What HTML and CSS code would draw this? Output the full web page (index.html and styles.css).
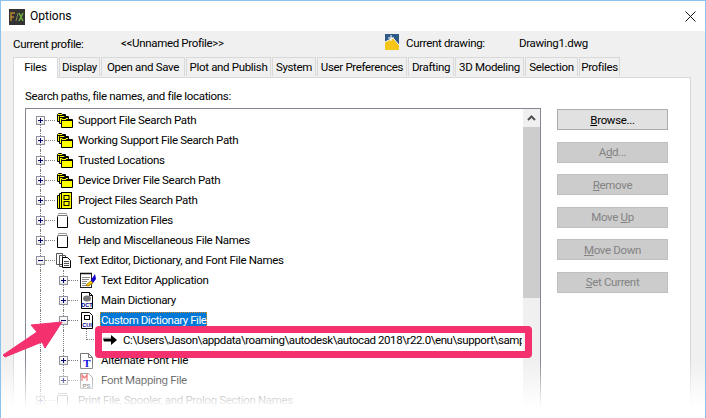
FILE: index.html
```html
<!DOCTYPE html>
<html lang="en">
<head>
<meta charset="utf-8">
<title>Options</title>
<link rel="stylesheet" href="styles.css">
</head>
<body>
<svg class="defs" width="0" height="0" aria-hidden="true">
  <symbol id="i-folders" viewBox="0 0 17 17">
    <path d="M1.500 9.500v-7l1-1h3l1 1h3v7z" fill="#ff0" stroke="#000"/>
    <path d="M3.500 11.500v-7l1-1h3l1 1h4v7z" fill="#ff0" stroke="#000"/>
    <path d="M5.500 15.500v-8l1-1h3l1 1h6v8z" fill="#ff0" stroke="#000"/>
    <path d="M1.500 3.500h8M3.500 5.500h9M5.500 8.500h11" stroke="#000"/>
  </symbol>
  <symbol id="i-project" viewBox="0 0 17 17">
    <path d="M1.500 3.500h2v13h-2zM3.500 1.500h2v15h-2z" fill="#ff0" stroke="#000"/>
    <rect x="5.500" y=".5" width="10" height="16" fill="#ff0" stroke="#000"/>
    <rect x="8" y="3.500" width="5" height="4" fill="#ff0" stroke="#000"/>
    <rect x="8" y="9.500" width="5" height="4" fill="#ff0" stroke="#000"/>
  </symbol>
  <symbol id="i-docs" viewBox="0 0 17 17">
    <path d="M2.500 2.500v-1h8v1" fill="#fff" stroke="#999"/>
    <path d="M1.500 3.500h10" stroke="#777"/>
    <path d="M1.500 4.500v11h10v-11" fill="#fff" stroke="#000"/>
  </symbol>
  <symbol id="i-pages" viewBox="0 0 17 17">
    <path d="M.5 1.500h6v11h-6zM3.500 3.500h6v11h-6z" fill="#fff" stroke="#555"/>
    <path d="M6.500 5.500h5l3 3v7h-8z" fill="#fff" stroke="#000"/>
    <path d="M8 9.500h5M8 11.500h5M8 13.500h5" stroke="#555"/>
  </symbol>
  <symbol id="i-editor" viewBox="0 0 17 17">
    <rect x="1.500" y="1.500" width="11" height="14" fill="#fff" stroke="#222"/>
    <path d="M2 .5v2M4 .5v2M6 .5v2M8 .5v2M10 .5v2M12 .5v2" stroke="#000"/>
    <path d="M3 5.500h8M3 7.500h7M3 9.500h5M3 11.500h4M3 13.500h8" stroke="#888"/>
    <path d="M7 13l5-4 2 2-5 3z" fill="#fc0" stroke="#a80"/>
    <path d="M12 8l4-6 1 5-3 4z" fill="#10c"/>
  </symbol>
  <symbol id="i-arrow" viewBox="0 0 14 12">
    <path d="M0 4.500h8V1l6 5-6 5V7.500H1z" fill="#000"/>
    <path d="M0 4h8" stroke="#aaa"/>
  </symbol>
</svg>

<div class="window">
  <header class="titlebar">
    <svg class="app-icon" viewBox="0 0 16 16" width="16" height="16" aria-hidden="true">
      <rect width="16" height="16" fill="#333"/>
      <path d="M2 12V4h4M2 8h3" fill="none" stroke="#b8862e" stroke-width="1.500"/>
      <path d="M7 12l2-8" fill="none" stroke="#8a8a5a"/>
      <path d="M10 4l4 8M14 4l-4 8" fill="none" stroke="#6fae3c" stroke-width="1.500"/>
    </svg>
    <span class="title">Options</span>
    <svg class="close" viewBox="0 0 11 11" width="11" height="11" aria-hidden="true">
      <path d="M.5.500l10 10M10.500.500l-10 10" stroke="#111" fill="none"/>
    </svg>
  </header>

  <div class="profile">
    <span class="profile-label">Current profile:</span>
    <span class="profile-name">&lt;&lt;Unnamed Profile&gt;&gt;</span>
    <svg class="dwg-icon" viewBox="0 0 15 16" width="15" height="16" aria-hidden="true">
      <rect x="0" y="0" width="14" height="10" fill="#2d5a86"/>
      <path d="M0 16V8l8-4 6 7v5z" fill="#f5c518"/>
      <path d="M0 8l8-4 6 7" fill="none" stroke="#fff"/>
      <path d="M6 1v6M3 4h6" stroke="#fff"/>
    </svg>
    <span class="drawing-label">Current drawing:</span>
    <span class="drawing-name">Drawing1.dwg</span>
  </div>

  <nav class="tabs">
    <span class="tab active w45">Files</span>
    <span class="tab w42">Display</span>
    <span class="tab w85">Open and Save</span>
    <span class="tab w86">Plot and Publish</span>
    <span class="tab w45">System</span>
    <span class="tab w91">User Preferences</span>
    <span class="tab w47">Drafting</span>
    <span class="tab w70">3D Modeling</span>
    <span class="tab w54">Selection</span>
    <span class="tab w42">Profiles</span>
  </nav>

  <main class="panel">
    <section class="paths">
      <div class="paths-label">Search paths, file names, and file locations:</div>
      <div class="treebox">
        <div class="tree">
          <div class="row l0"><span class="exp plus"></span><span class="dash"></span><svg class="ico"><use href="#i-folders"/></svg><span class="label">Support File Search Path</span></div>
          <div class="row l0"><span class="exp plus"></span><span class="dash"></span><svg class="ico"><use href="#i-folders"/></svg><span class="label">Working Support File Search Path</span></div>
          <div class="row l0"><span class="exp plus"></span><span class="dash"></span><svg class="ico"><use href="#i-folders"/></svg><span class="label">Trusted Locations</span></div>
          <div class="row l0"><span class="exp plus"></span><span class="dash"></span><svg class="ico"><use href="#i-folders"/></svg><span class="label">Device Driver File Search Path</span></div>
          <div class="row l0"><span class="exp plus"></span><span class="dash"></span><svg class="ico"><use href="#i-project"/></svg><span class="label">Project Files Search Path</span></div>
          <div class="row l0"><span class="exp plus"></span><span class="dash"></span><svg class="ico"><use href="#i-docs"/></svg><span class="label">Customization Files</span></div>
          <div class="row l0"><span class="exp plus"></span><span class="dash"></span><svg class="ico"><use href="#i-docs"/></svg><span class="label">Help and Miscellaneous File Names</span></div>
          <div class="row l0"><span class="exp minus"></span><span class="dash"></span><svg class="ico"><use href="#i-pages"/></svg><span class="label">Text Editor, Dictionary, and Font File Names</span></div>
          <div class="row l1"><span class="exp plus"></span><span class="dash"></span><svg class="ico"><use href="#i-editor"/></svg><span class="label">Text Editor Application</span></div>
          <div class="row l1"><span class="exp plus"></span><span class="dash"></span>
            <svg class="ico" viewBox="0 0 17 17" aria-hidden="true">
              <path d="M2.500.5h8l3 3v13h-11z" fill="#fff" stroke="#000"/>
              <path d="M10.500.5v3h3" fill="none" stroke="#000"/>
              <ellipse cx="8" cy="6.500" rx="4" ry="3" fill="#777"/>
              <text x="8" y="15" class="icon-text">DCT</text>
            </svg><span class="label">Main Dictionary</span></div>
          <div class="row l1 open"><span class="exp minus"></span><span class="dash"></span>
            <svg class="ico" viewBox="0 0 17 17" aria-hidden="true">
              <path d="M2.500.5h8l3 3v13h-11z" fill="#fff" stroke="#000"/>
              <rect x="5.500" y="3.500" width="5" height="4" fill="#fff" stroke="#000"/>
              <text x="8" y="15" class="icon-text">CUI</text>
            </svg><span class="label selected">Custom Dictionary File</span></div>
          <div class="row l2"><span class="elbow"></span><svg class="arrow"><use href="#i-arrow"/></svg><span class="path">C:\Users\Jason\appdata\roaming\autodesk\autocad 2018\r22.0\enu\support\samp</span></div>
          <div class="row l1"><span class="exp plus"></span><span class="dash"></span>
            <svg class="ico" viewBox="0 0 17 17" aria-hidden="true">
              <path d="M1.500 1.500h8l4 4v11h-12z" fill="#fff" stroke="#777"/>
              <path d="M9.500 1.500v4h4" fill="none" stroke="#777"/>
              <text x="8" y="15" class="icon-text big">T</text>
            </svg><span class="label">Alternate Font File</span></div>
          <div class="row l1 last"><span class="exp plus"></span><span class="dash"></span>
            <svg class="ico" viewBox="0 0 17 17" aria-hidden="true">
              <path d="M1.500 1.500h8l4 4v11h-12z" fill="#fff" stroke="#888"/>
              <path d="M3 9V3l2.500 3L8 3v6" fill="none" stroke="#e33" stroke-width="1.300"/>
              <text x="7.500" y="15.500" class="icon-text ps">PS</text>
            </svg><span class="label">Font Mapping File</span></div>
          <div class="row l0"><span class="exp plus"></span><span class="dash"></span><svg class="ico"><use href="#i-docs"/></svg><span class="label">Print File, Spooler, and Prolog Section Names</span></div>
        </div>
        <div class="scrollbar">
          <div class="sb-btn"><svg viewBox="0 0 9 6" width="9" height="6" aria-hidden="true"><path d="M1 5l3.500-3.500L8 5" fill="none" stroke="#505050" stroke-width="2"/></svg></div>
          <div class="sb-thumb"></div>
        </div>
      </div>
    </section>
    <aside class="actions">
      <span class="btn"><u>B</u>rowse...</span>
      <span class="btn off">A<u>d</u>d...</span>
      <span class="btn off"><u>R</u>emove</span>
      <span class="btn off">Move <u>U</u>p</span>
      <span class="btn off"><u>M</u>ove Down</span>
      <span class="btn off"><u>S</u>et Current</span>
    </aside>
  </main>

  <div class="highlight"></div>
  <svg class="pointer" viewBox="0 0 70 45" width="70" height="45" aria-hidden="true">
    <path d="M62 7L31 10l6 7L3 40l2 2 37-15 3 6z" fill="#f5306f" stroke="#f5306f" stroke-linejoin="round"/>
  </svg>
  <div class="fade"></div>
</div>
</body>
</html>
```

FILE: styles.css
```css
* { box-sizing: border-box; }
html, body { margin: 0; padding: 0; }
body {
  width: 706px;
  height: 418px;
  overflow: hidden;
  font-family: Roboto, "Liberation Sans", sans-serif;
  font-size: 11.500px;
  letter-spacing: -0.33px;
  color: #000;
  background: #fff;
}
.defs { position: absolute; }
.icon-text { font-family: "Liberation Sans", sans-serif; font-weight: 700; text-anchor: middle; font-size: 5.500px; letter-spacing: 0; fill: #00008b; }
.ps { font-size: 6px; fill: #333; }
.big { font-size: 11px; fill: #0000e0; font-family: "Liberation Serif", serif; }

.window {
  position: relative;
  width: 706px;
  height: 418px;
  overflow: hidden;
  background: #f0f0f0;
  border: 1px solid #8cc3ee;
  border-bottom: 0;
  display: flex;
  flex-direction: column;
}
.titlebar {
  height: 30px;
  flex: none;
  background: #fff;
  display: flex;
  align-items: center;
  padding: 0 9px 0 8px;
}
.app-icon { flex: none; margin-right: 5px; margin-top: 1px; }
.title { font-size: 12px; letter-spacing: 0; }
.close { margin-left: auto; margin-right: 0; }

.profile {
  height: 26px;
  flex: none;
  display: flex;
  align-items: center;
  padding-left: 12px;
}
.profile-label { width: 108px; }
.profile-name { width: 264px; margin-top: -2px; }
.dwg-icon { flex: none; margin-right: 6px; margin-top: -4px; }
.drawing-label { width: 113px; margin-top: -2px; }
.drawing-name { margin-top: -2px; }

.tabs {
  flex: none;
  height: 20px;
  display: flex;
  align-items: flex-end;
  margin-left: 12px;
  position: relative;
  z-index: 1;
}
.tab {
  height: 19px;
  margin-right: 1px;
  margin-bottom: 1px;
  background: #f0f0f0;
  border: 1px solid #d9d9d9;
  border-bottom: 0;
  display: flex;
  align-items: center;
  justify-content: center;
  white-space: nowrap;
}
.tab.active {
  height: 21px;
  margin-bottom: -1px;
  background: #fff;
  padding-bottom: 3px;
}
.w42 { width: 41px; }
.w45 { width: 44px; }
.w47 { width: 46px; }
.w54 { width: 53px; }
.w70 { width: 69px; }
.w85 { width: 84px; }
.w86 { width: 85px; }
.w91 { width: 90px; }
.tab.active.w45 { width: 45px; margin-right: 1px; }

.panel {
  flex: 1;
  margin: 0 14px 0 12px;
  background: #fff;
  border: 1px solid #d9d9d9;
  border-bottom: 0;
  display: flex;
  padding: 10px 0 0 11px;
}
.paths { width: 516px; flex: none; }
.paths-label { height: 16px; line-height: 16px; margin-bottom: 4px; }
.treebox {
  height: 320px;
  display: flex;
  border: 1px solid #828790;
  border-bottom: 0;
}
.tree {
  flex: 1;
  min-width: 0;
  padding-top: 1px;
  overflow: hidden;
}
.row {
  position: relative;
  height: 20px;
  display: flex;
  align-items: center;
  white-space: nowrap;
}
.row::before {
  content: "";
  position: absolute;
  left: 14px;
  top: 0;
  bottom: 0;
  border-left: 1px dotted #808080;
}
.row:first-child::before { top: 10px; }
.l0 { padding-left: 10px; }
.l1, .l2 { padding-left: 33px; }
.l1::after, .l2::after {
  content: "";
  position: absolute;
  left: 37px;
  top: 0;
  bottom: 0;
  border-left: 1px dotted #808080;
}
.last::after { bottom: 10px; }
.exp {
  position: relative;
  z-index: 1;
  flex: none;
  width: 9px;
  height: 9px;
  background: linear-gradient(#fff, #e6e6e6);
  border: 1px solid #8f8f9d;
}
.exp::before {
  content: "";
  position: absolute;
  left: 1px;
  top: 3px;
  width: 5px;
  height: 1px;
  background: #00006e;
}
.plus::after {
  content: "";
  position: absolute;
  left: 3px;
  top: 1px;
  width: 1px;
  height: 5px;
  background: #00006e;
}
.dash {
  flex: none;
  width: 10px;
  border-top: 1px dotted #808080;
}
.ico {
  flex: none;
  width: 17px;
  height: 17px;
  margin-left: 1px;
}
.label { margin-left: 5px; }
.selected {
  margin-left: 4px;
  padding: 0 1px;
  line-height: 16px;
  height: 16px;
  letter-spacing: -0.45px;
  background: #0078d7;
  color: #fff;
  outline: 1px dotted #d08a20;
  outline-offset: -1px;
}
.open { z-index: 1; }
.elbow {
  position: absolute;
  left: 60px;
  top: -8px;
  width: 14px;
  height: 18px;
  border-left: 1px dotted #808080;
  border-bottom: 1px dotted #808080;
}
.l2 { padding-left: 77px; }
.arrow { flex: none; width: 14px; height: 12px; }
.path {
  margin-left: 6px;
  width: 399px;
  flex: none;
  overflow: hidden;
  letter-spacing: -0.42px;
}

.scrollbar {
  width: 17px;
  flex: none;
  background: #f0f0f0;
  display: flex;
  flex-direction: column;
}
.sb-btn {
  height: 18px;
  display: flex;
  align-items: center;
  justify-content: center;
}
.sb-thumb { height: 171px; background: #cdcdcd; }

.actions {
  margin: 21px 0 0 16px;
  width: 111px;
  flex: none;
  display: flex;
  flex-direction: column;
  gap: 11.500px;
}
.btn {
  height: 21px;
  flex: none;
  background: #e1e1e1;
  border: 1px solid #adadad;
  display: flex;
  align-items: center;
  justify-content: center;
  white-space: pre;
}
.btn.off {
  background: #cccccc;
  border-color: #bfbfbf;
  color: #838383;
}

.highlight {
  position: absolute;
  z-index: 2;
  left: 94px;
  top: 325px;
  width: 437px;
  height: 32px;
  border: 7px solid #f5306f;
  border-radius: 4px;
}
.pointer {
  position: absolute;
  z-index: 2;
  left: -1px;
  top: 314px;
}
.fade {
  position: absolute;
  z-index: 3;
  left: -1px;
  right: -1px;
  top: 360px;
  height: 46px;
  background: linear-gradient(rgba(255, 255, 255, 0), #fff);
}
.fade::after {
  content: "";
  position: absolute;
  left: 0;
  right: 0;
  top: 46px;
  height: 12px;
  background: #fff;
}
```
